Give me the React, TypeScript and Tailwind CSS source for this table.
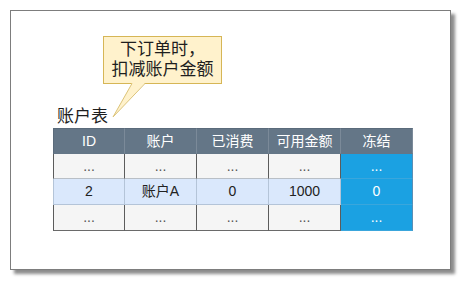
const font = { fontFamily: '"Liberation Sans", "Noto Sans CJK SC", sans-serif' };

const cols = ["ID", "账户", "已消费", "可用金额", "冻结"];

const rows = [
  { cells: ["...", "...", "...", "...", "..."], kind: "gray" },
  { cells: ["2", "账户A", "0", "1000", "0"], kind: "blue" },
  { cells: ["...", "...", "...", "...", "..."], kind: "gray" },
];

function Cell({ text, kind, last, first, bottom, h }: { text: string; kind: string; last: boolean; first: boolean; bottom: boolean; h: string }) {
  let cls = "";
  if (last) {
    cls = "bg-[#1ba1e2] text-white border-[#3aa6dc] border-r-[#5a8fb5]";
  } else if (kind === "blue") {
    cls = "bg-[#dae8fc] text-[#222] border-[#b4c4d8]";
  } else {
    cls = `bg-[#f5f5f5] text-[#555] border-r-[#5c5c5c] border-l-[#5c5c5c] ${bottom ? "border-b-[#6a6a6a]" : "border-b-[#b9bfc6]"}`;
  }
  return (
    <div
      className={`w-[72px] ${h} flex items-center justify-center border-r border-b ${first ? "border-l" : ""} ${cls} text-[14px]`}
    >
      {text}
    </div>
  );
}

export default function App() {
  return (
    <div className="w-[463px] h-[282px] bg-white pt-[10px] pl-[10px]" style={font}>
      <div className="w-[441px] h-[260px] border border-[#7d7d7d] bg-white shadow-[4px_4px_3px_rgba(0,0,0,0.45)] flex flex-col">
        <div className="relative ml-[92px] mt-[25px] w-[119px] h-[48px] bg-[#fff2cc] border border-[#d6b656] flex flex-col items-center justify-center text-[17px] leading-[20px] text-[#1e1e1e]">
          <span>下订单时，</span>
          <span>扣减账户金额</span>
          <svg className="absolute left-[-1px] top-[-1px] overflow-visible" width="120" height="84">
            <polygon points="29,47 42,47 10,81" fill="#fff2cc" />
            <polyline points="29,47.5 10,81 42,47.5" fill="none" stroke="#dcc47a" strokeWidth="1" />
          </svg>
        </div>
        <div className="ml-[46px] mt-[23px] text-[17px] leading-[20px] text-[#1e1e1e]">账户表</div>
        <div className="ml-[42px] mt-[1px] flex flex-col">
          <div className="flex">
            {cols.map((c, i) => (
              <div
                key={c}
                className={`w-[72px] h-[26px] flex items-center justify-center bg-[#647687] text-white text-[14px] border-t border-r border-b border-t-[#5b6b7b] border-r-[#7b8a99] border-b-[#647687] ${i === 0 ? "border-l border-l-[#5b6b7b]" : ""} ${i === 4 ? "border-r-[#5b6b7b]" : ""}`}
              >
                {c}
              </div>
            ))}
          </div>
          {rows.map((r, ri) => (
            <div key={ri} className="flex">
              {r.cells.map((t, ci) => (
                <Cell
                  key={ci}
                  text={t}
                  kind={r.kind}
                  first={ci === 0}
                  last={ci === 4}
                  bottom={ri === rows.length - 1}
                  h={ri === 0 ? "h-[25px]" : "h-[26px]"}
                />
              ))}
            </div>
          ))}
        </div>
      </div>
    </div>
  );
}
